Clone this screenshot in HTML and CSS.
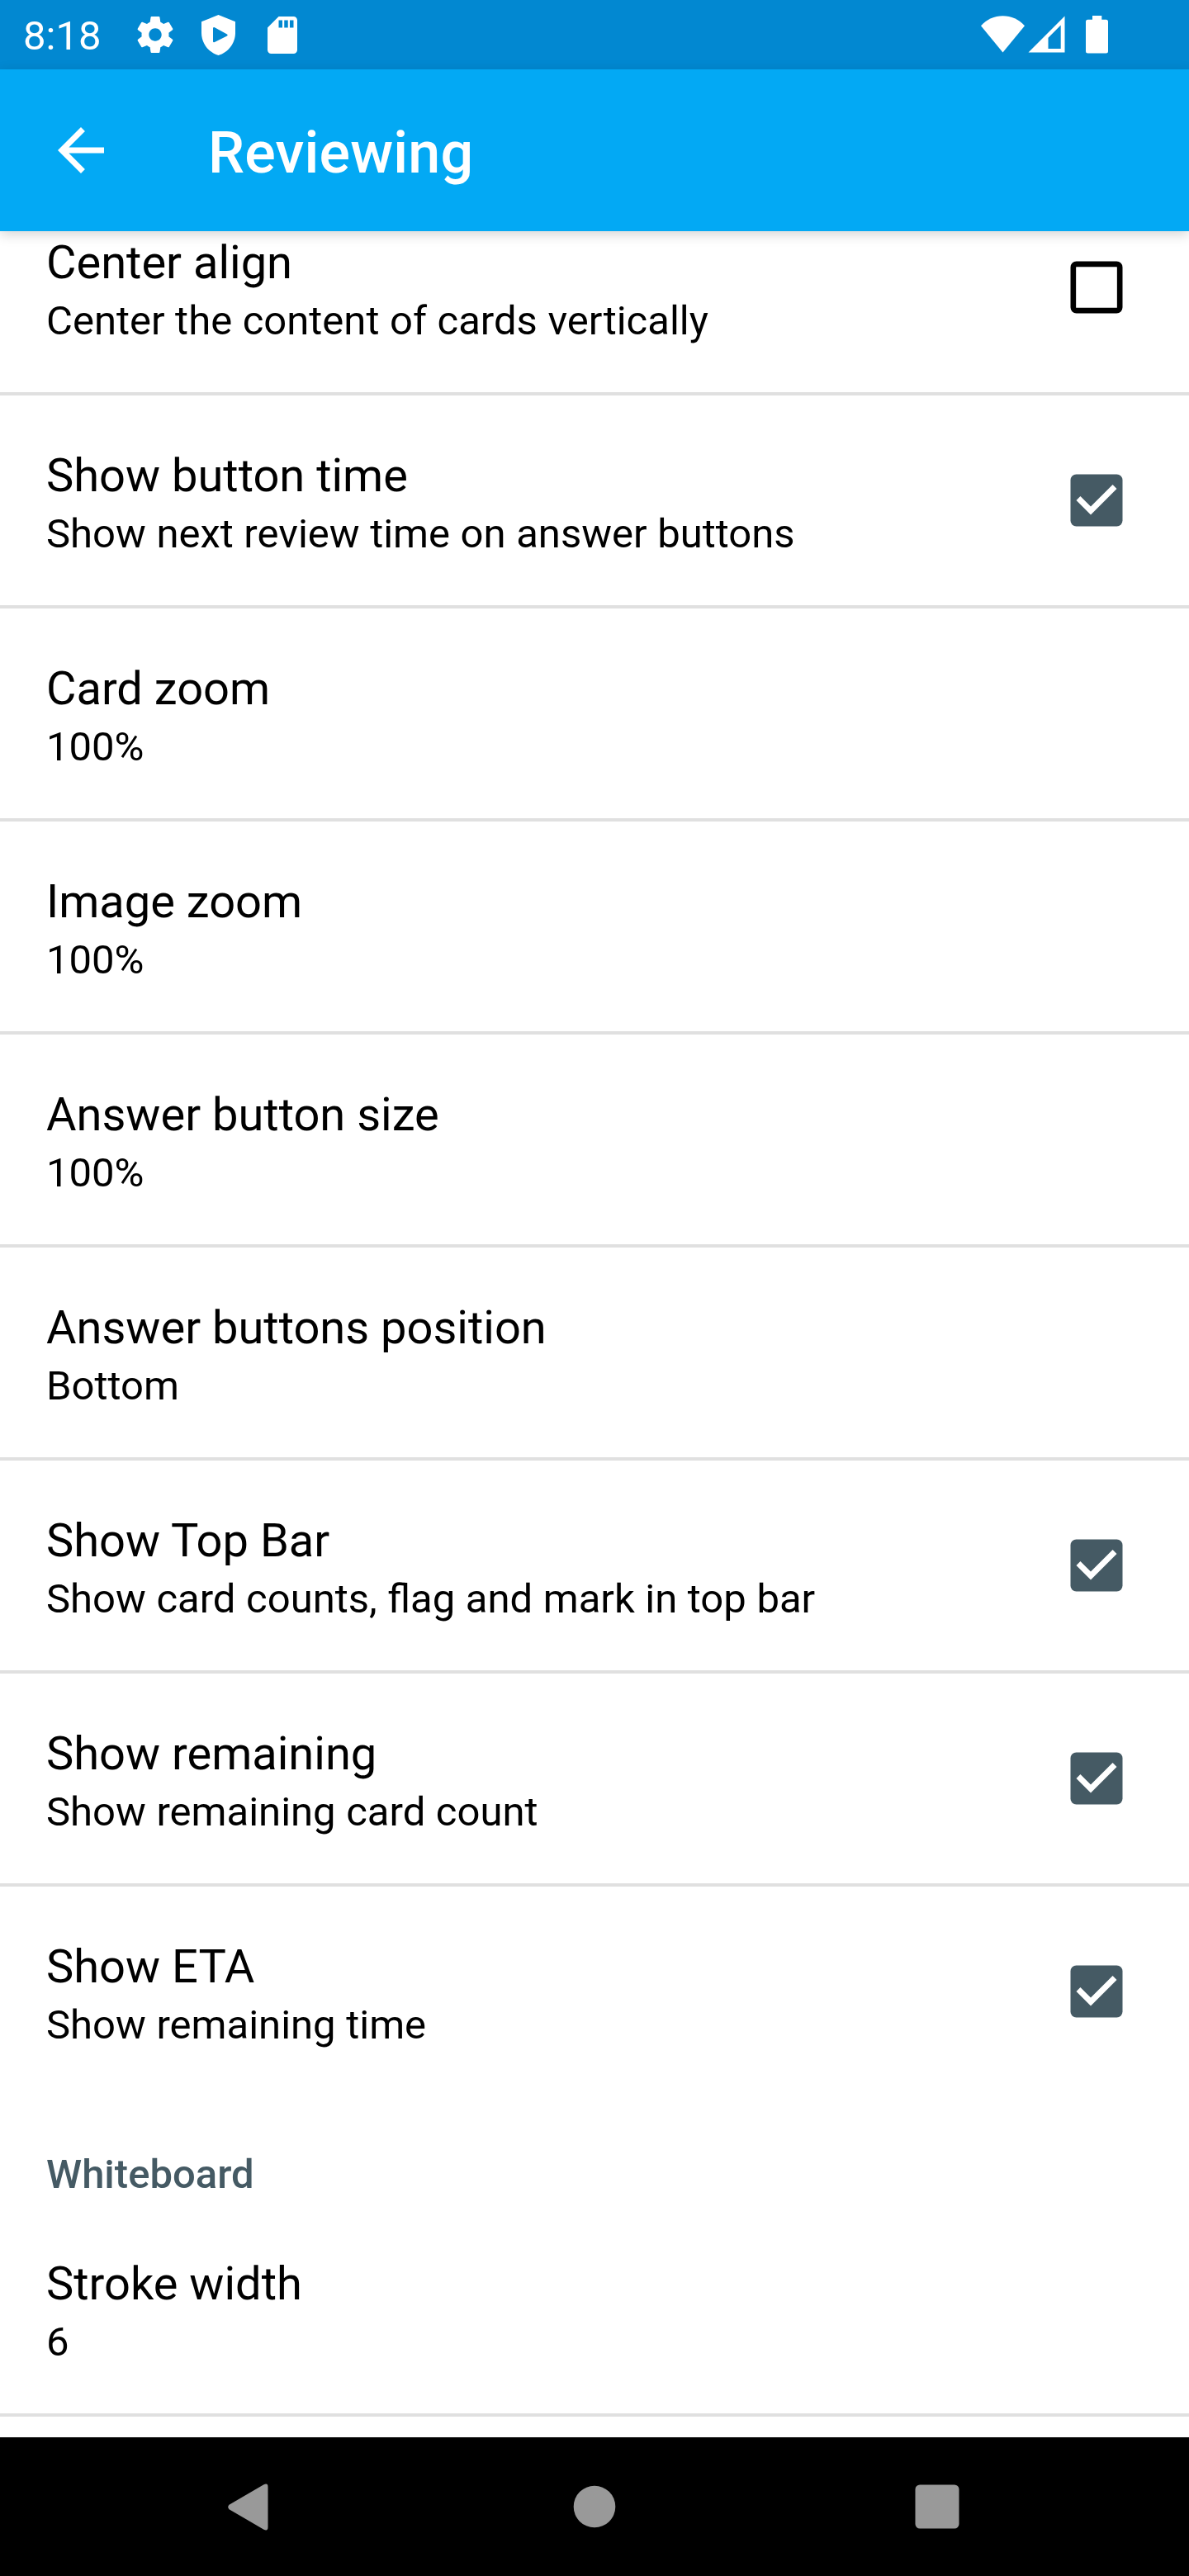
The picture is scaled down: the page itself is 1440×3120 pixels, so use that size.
FILE: index.html
```
<!DOCTYPE html>
<html lang="en">
<head>
<meta charset="utf-8">
<title>Reviewing</title>
<link rel="stylesheet" href="styles.css">
</head>
<body>
<div class="screen">
  <div class="status-bar">
    <span class="clock">8:18</span>
    <svg class="gear" viewBox="2 2 20 20"><path d="M19.43 12.98c.04-.32.07-.64.07-.98s-.03-.66-.07-.98l2.11-1.65c.19-.15.24-.42.12-.64l-2-3.46c-.12-.22-.39-.3-.61-.22l-2.49 1c-.52-.4-1.08-.73-1.69-.98l-.38-2.65C14.46 2.18 14.25 2 14 2h-4c-.25 0-.46.18-.49.42l-.38 2.65c-.61.25-1.17.59-1.69.98l-2.49-1c-.23-.09-.49 0-.61.22l-2 3.46c-.13.22-.07.49.12.64l2.11 1.65c-.04.32-.07.65-.07.98s.03.66.07.98l-2.11 1.65c-.19.15-.24.42-.12.64l2 3.46c.12.22.39.3.61.22l2.49-1c.52.4 1.08.73 1.69.98l.38 2.65c.03.24.24.42.49.42h4c.25 0 .46-.18.49-.42l.38-2.65c.61-.25 1.17-.59 1.69-.98l2.49 1c.23.09.49 0 .61-.22l2-3.46c.12-.22.07-.49-.12-.64l-2.11-1.65zM12 15.5c-1.93 0-3.5-1.57-3.5-3.5s1.57-3.5 3.5-3.5 3.5 1.57 3.5 3.5-1.57 3.5-3.5 3.5z"/></svg>
    <svg class="shield" viewBox="0 0 41 49"><path fill-rule="evenodd" d="M20.5 0L41 8.300V22C41 34 32.500 45.800 20.500 49C8.500 45.800 0 34 0 22V8.300ZM14 16.500V32Q14 34 16 33L31 25.500Q32.300 24.500 31 23.500L16 15.200Q14 14.500 14 16.500Z"/></svg>
    <svg class="sd-card" viewBox="4 2 16 20"><path d="M18 2h-8L4.020 8 4 20c0 1.100.9 2 2 2h12c1.100 0 2-.9 2-2V4c0-1.100-.9-2-2-2zm-6 6h-2V4h2v4zm3 0h-2V4h2v4zm3 0h-2V4h2v4z"/></svg>
    <svg class="wifi" viewBox="0 0 53 45"><path d="M0 12.300C7 4.500 16.500.3 26.500.3S46 4.500 53 12.300L26.500 44.500Z"/></svg>
    <svg class="signal" viewBox="0 0 45 45"><path fill-rule="evenodd" d="M44.500.5V44.500H.500ZM39.700 11.500L24.500 26.700V40H39.700Z"/></svg>
    <svg class="battery" viewBox="0 0 27 46"><path d="M8 0H19.300V4.700H24.500Q27 4.700 27 7.200V43Q27 45.500 24.500 45.500H2.500Q0 45.500 0 43V7.200Q0 4.700 2.500 4.700H8Z"/></svg>
  </div>
  <header class="toolbar">
    <svg class="back" viewBox="0 0 24 24"><path d="M20 11H7.830l5.590-5.590L12 4l-8 8 8 8 1.410-1.410L7.830 13H20v-2z"/></svg>
    <h1 class="heading">Reviewing</h1>
  </header>
  <main class="settings">
    <div class="row clipped"><div class="label"><div class="title">Center align</div><div class="summary">Center the content of cards vertically</div></div>
      <svg class="checkbox" viewBox="0 0 24 24"><rect class="box-outline" x="3.950" y="3.950" width="16.100" height="16.100" rx="1.100"/></svg></div>
    <div class="row"><div class="label"><div class="title">Show button time</div><div class="summary">Show next review time on answer buttons</div></div>
      <svg class="checkbox" viewBox="0 0 24 24"><rect class="box" x="3" y="3" width="18" height="18" rx="2"/><path class="tick" d="M10 17l-5-5 1.410-1.410L10 14.170l7.590-7.590L19 8z"/></svg></div>
    <div class="row"><div class="label"><div class="title">Card zoom</div><div class="summary">100%</div></div></div>
    <div class="row"><div class="label"><div class="title">Image zoom</div><div class="summary">100%</div></div></div>
    <div class="row"><div class="label"><div class="title">Answer button size</div><div class="summary">100%</div></div></div>
    <div class="row"><div class="label"><div class="title">Answer buttons position</div><div class="summary">Bottom</div></div></div>
    <div class="row"><div class="label"><div class="title">Show Top Bar</div><div class="summary">Show card counts, flag and mark in top bar</div></div>
      <svg class="checkbox" viewBox="0 0 24 24"><rect class="box" x="3" y="3" width="18" height="18" rx="2"/><path class="tick" d="M10 17l-5-5 1.410-1.410L10 14.170l7.590-7.590L19 8z"/></svg></div>
    <div class="row"><div class="label"><div class="title">Show remaining</div><div class="summary">Show remaining card count</div></div>
      <svg class="checkbox" viewBox="0 0 24 24"><rect class="box" x="3" y="3" width="18" height="18" rx="2"/><path class="tick" d="M10 17l-5-5 1.410-1.410L10 14.170l7.590-7.590L19 8z"/></svg></div>
    <div class="row last"><div class="label"><div class="title">Show ETA</div><div class="summary">Show remaining time</div></div>
      <svg class="checkbox" viewBox="0 0 24 24"><rect class="box" x="3" y="3" width="18" height="18" rx="2"/><path class="tick" d="M10 17l-5-5 1.410-1.410L10 14.170l7.590-7.590L19 8z"/></svg></div>
    <h2 class="category">Whiteboard</h2>
    <div class="row"><div class="label"><div class="title">Stroke width</div><div class="summary">6</div></div></div>
  </main>
  <nav class="nav-bar">
    <svg class="nav-back" viewBox="0 0 49 57"><path d="M1.500 25.800L43.500 1.300Q48.500-1 48.500 4V53Q48.500 58 43.500 55.700L1.500 31.200Q-1 28.500 1.500 25.800Z"/></svg>
    <svg class="nav-home" viewBox="0 0 52 52"><circle cx="26" cy="26" r="25.300"/></svg>
    <svg class="nav-recents" viewBox="0 0 54 54"><rect x=".5" y=".5" width="53" height="53" rx="5.500"/></svg>
  </nav>
</div>
</body>
</html>
```
FILE: styles.css
```
body {
  margin: 0;
  font-family: Roboto, sans-serif;
  color: #000;
  background: #fff;
}
.screen {
  display: flex;
  flex-direction: column;
  width: 1440px;
  height: 3120px;
  overflow: hidden;
}
svg {
  display: block;
  flex: none;
}
.status-bar {
  display: flex;
  align-items: flex-start;
  flex: none;
  height: 84px;
  box-sizing: border-box;
  padding-left: 28px;
  background: #0288d1;
  color: #fff;
  fill: #fff;
}
.clock {
  width: 138px;
  margin-top: 14px;
  font-size: 49px;
  line-height: 60px;
}
.gear { width: 44px; height: 44px; margin-top: 20px; }
.shield { width: 41px; height: 49px; margin: 18px 0 0 34px; }
.sd-card { width: 36px; height: 45px; margin: 20px 0 0 38.5px; }
.wifi { width: 53px; height: 45px; margin: 19px 4.5px 0 auto; }
.signal { width: 45px; height: 45px; margin-top: 19px; }
.battery { width: 27px; height: 46px; margin: 19px 98px 0 25px; }

.toolbar {
  display: flex;
  align-items: center;
  flex: none;
  height: 196px;
  padding-left: 56px;
  gap: 112px;
  background: #03a9f4;
  color: #fff;
  fill: #fff;
  box-shadow: 0 4px 14px rgba(0, 0, 0, 0.17);
  z-index: 1;
}
.back { width: 84px; height: 84px; }
.heading {
  margin: 6px 0 0;
  font-size: 70px;
  font-weight: 500;
  line-height: 84px;
  letter-spacing: 0.2px;
}
.settings {
  flex: 1;
  min-height: 0;
  overflow: hidden;
}
.row {
  display: flex;
  justify-content: space-between;
  align-items: center;
  height: 254px;
  padding: 0 70px 0 56px;
  border-bottom: 4px solid #e0e0e0;
}
.row.clipped { margin-top: -59px; }
.row.last { border-bottom: 0; }
.label { padding-top: 7px; }
.title {
  font-size: 56px;
  line-height: 74px;
}
.summary {
  font-size: 49px;
  line-height: 67px;
  word-spacing: 0.4px;
}
.checkbox { width: 84px; height: 84px; }
.box { fill: #455a64; }
.box-outline { fill: none; stroke: #000; stroke-width: 1.9; }
.tick { fill: #fff; }
.category {
  height: 68px;
  margin: 0;
  padding: 62px 56px 0;
  font-size: 49px;
  font-weight: 500;
  line-height: 66px;
  color: #455a64;
}
.nav-bar {
  display: flex;
  align-items: center;
  justify-content: space-between;
  flex: none;
  height: 168px;
  box-sizing: border-box;
  padding: 0 278px 0 276px;
  background: #000;
  fill: #999;
}
.nav-back { width: 49px; height: 57px; }
.nav-home { width: 52px; height: 52px; margin-left: 7px; }
.nav-recents { width: 54px; height: 54px; }
```
